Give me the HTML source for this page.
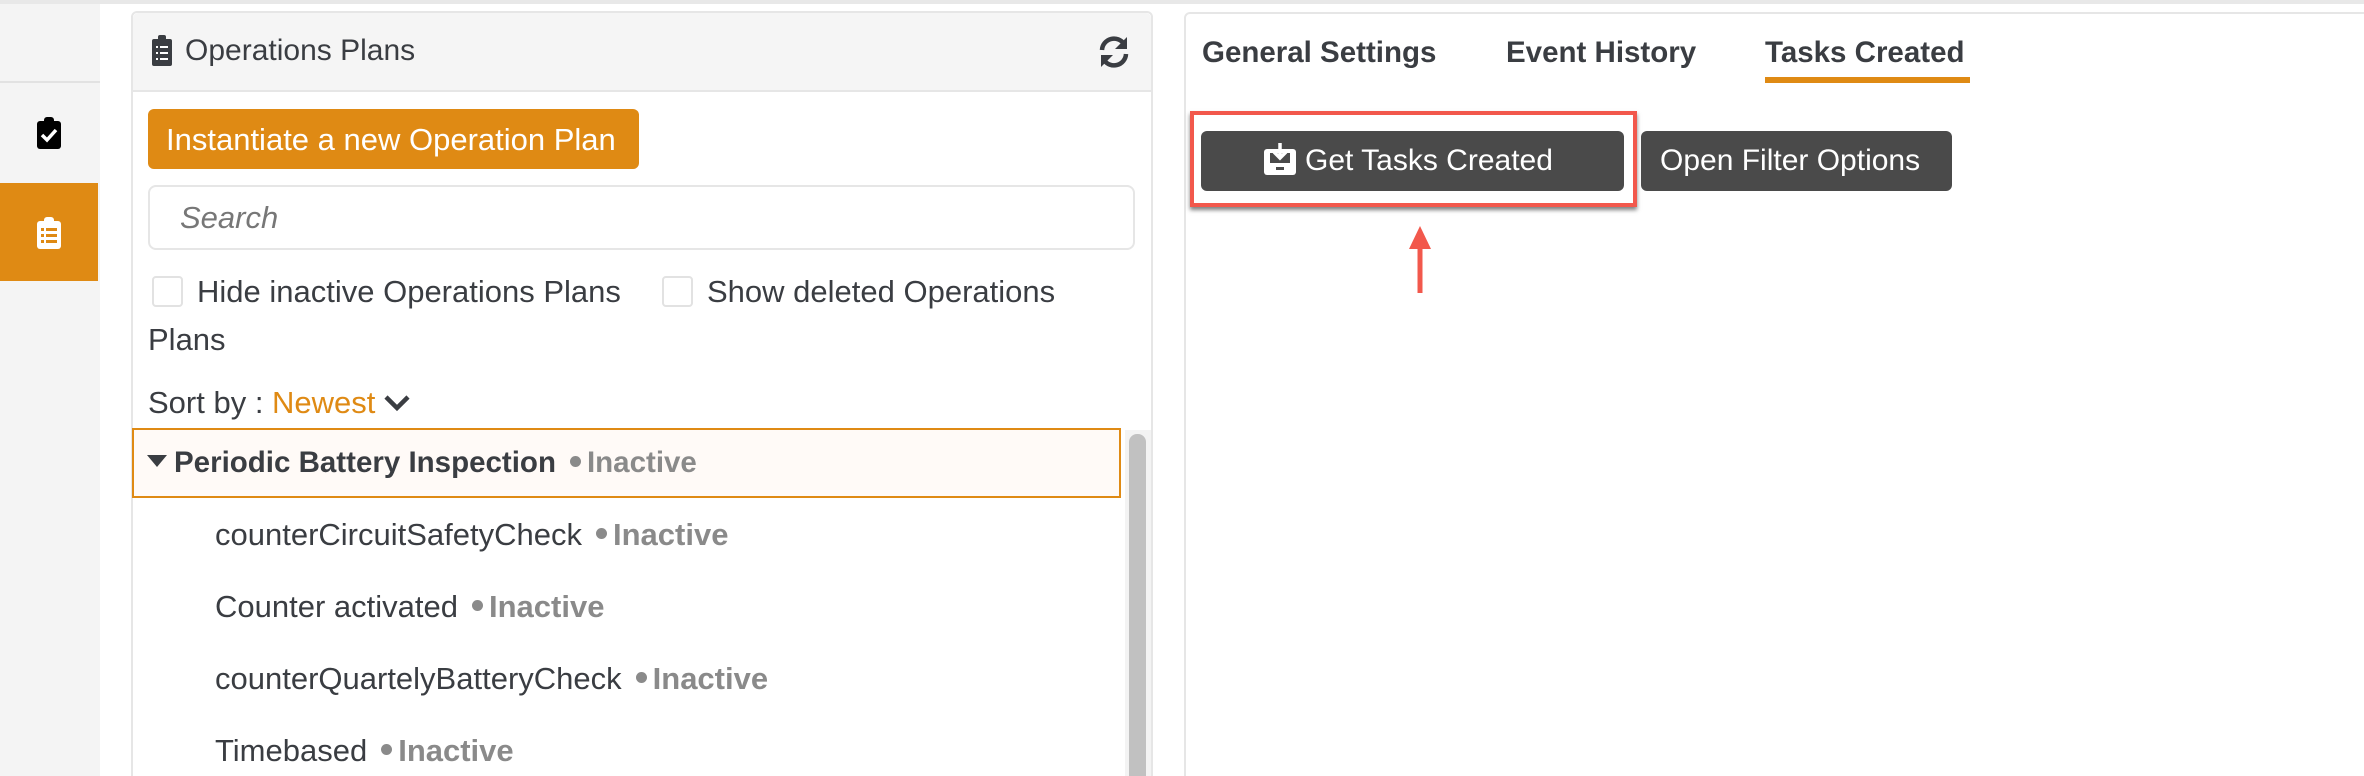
<!DOCTYPE html>
<html style="overflow:hidden"><head><meta charset="utf-8"><style>
*{box-sizing:border-box;margin:0;padding:0}
body{width:2364px;height:776px;overflow:hidden;background:#fff;font-family:"Liberation Sans",sans-serif;color:#3a3d42;position:relative}
.a{position:absolute}
.t{font-size:31px;white-space:nowrap;line-height:1}
.b{font-weight:bold;font-size:29.5px}
.in{color:#8a8a8a;font-weight:bold}
.dot{display:inline-block;width:11px;height:11px;border-radius:50%;background:#8a8a8a;margin:0 6px 0 14px;vertical-align:middle;position:relative;top:-3px}
.cb{width:31px;height:31px;border:2px solid #e2e2e2;border-radius:4px;background:#fff}
</style></head><body>
<div class="a" style="left:0;top:0;width:2364px;height:4px;background:#e8e8e8"></div>
<div class="a" style="left:0;top:4px;width:100px;height:772px;background:#f4f4f4"></div>
<div class="a" style="left:0;top:81px;width:100px;height:2px;background:#e2e2e2"></div>
<svg class="a" style="left:36px;top:116px" width="26" height="34" viewBox="0 0 26 34"><rect x="1" y="5" width="24" height="28" rx="3" fill="#000"/><rect x="8" y="1" width="10" height="8" rx="3" fill="#000"/><path d="M6 19l5 5 9-10" stroke="#fff" stroke-width="3.5" fill="none"/></svg>
<div class="a" style="left:0;top:183px;width:98px;height:98px;background:#df8a14"></div>
<svg class="a" style="left:36px;top:216px" width="26" height="34" viewBox="0 0 26 34"><rect x="1" y="5" width="24" height="28" rx="3" fill="#fff"/><rect x="8" y="1" width="10" height="8" rx="3" fill="#fff"/><g fill="#df8a14"><rect x="5" y="12" width="3" height="3"/><rect x="10" y="12" width="11" height="3"/><rect x="5" y="18" width="3" height="3"/><rect x="10" y="18" width="11" height="3"/><rect x="5" y="24" width="3" height="3"/><rect x="10" y="24" width="11" height="3"/></g></svg>

<div class="a" style="left:131px;top:11px;width:1022px;height:800px;border:2px solid #e6e6e6;border-radius:6px;background:#fff"></div>
<div class="a" style="left:133px;top:13px;width:1018px;height:79px;background:#f5f5f5;border-bottom:2px solid #e6e6e6;border-radius:5px 5px 0 0"></div>
<svg class="a" style="left:152px;top:34px" width="20" height="32" viewBox="0 0 20 32"><rect x="0" y="5" width="20" height="27" rx="2" fill="#3a3d42"/><rect x="6" y="1" width="8" height="7" rx="2" fill="#3a3d42"/><g fill="#fff"><rect x="4" y="12" width="2" height="2"/><rect x="8" y="12" width="8" height="2"/><rect x="4" y="18" width="2" height="2"/><rect x="8" y="18" width="8" height="2"/><rect x="4" y="24" width="2" height="2"/><rect x="8" y="24" width="8" height="2"/></g></svg>
<div class="a t" style="left:185px;top:36px;font-size:30px">Operations Plans</div>
<svg class="a" style="left:1097px;top:35px" width="34" height="34" viewBox="0 0 34 34"><path d="M5 15A12 12 0 0 1 27 9" stroke="#3a3d42" stroke-width="4.5" fill="none"/><path d="M30 2v12H18z" fill="#3a3d42"/><path d="M29 19A12 12 0 0 1 7 25" stroke="#3a3d42" stroke-width="4.5" fill="none"/><path d="M4 32V20h12z" fill="#3a3d42"/></svg>
<div class="a" style="left:148px;top:109px;width:491px;height:60px;background:#df8a14;border-radius:6px"></div>
<div class="a t" style="left:166px;top:124px;color:#fff">Instantiate a new Operation Plan</div>
<div class="a" style="left:148px;top:185px;width:987px;height:65px;border:2px solid #e6e6e6;border-radius:8px"></div>
<div class="a t" style="left:180px;top:202px;color:#777;font-style:italic">Search</div>
<div class="a cb" style="left:152px;top:276px"></div>
<div class="a t" style="left:197px;top:276px">Hide inactive Operations Plans</div>
<div class="a cb" style="left:662px;top:276px"></div>
<div class="a t" style="left:707px;top:276px">Show deleted Operations</div>
<div class="a t" style="left:148px;top:324px">Plans</div>
<div class="a t" style="left:148px;top:387px">Sort by : <span style="color:#df8a14">Newest</span><svg width="28" height="20" viewBox="0 0 28 20" style="margin-left:8px"><path d="M3 4l11 11 11-11" stroke="#3a3d42" stroke-width="4.5" fill="none"/></svg></div>
<div class="a" style="left:132px;top:428px;width:989px;height:70px;background:#fffaf7;border:2px solid #df8a14"></div>
<svg class="a" style="left:147px;top:455px" width="20" height="14"><path d="M0 0h20L10 12z" fill="#3a3d42"/></svg>
<div class="a t b" style="left:174px;top:448px">Periodic Battery Inspection<span class="dot"></span><span class="in">Inactive</span></div>
<div class="a t" style="left:215px;top:519px">counterCircuitSafetyCheck<span class="dot"></span><span class="in">Inactive</span></div>
<div class="a t" style="left:215px;top:591px">Counter activated<span class="dot"></span><span class="in">Inactive</span></div>
<div class="a t" style="left:215px;top:663px">counterQuartelyBatteryCheck<span class="dot"></span><span class="in">Inactive</span></div>
<div class="a t" style="left:215px;top:735px">Timebased<span class="dot"></span><span class="in">Inactive</span></div>
<div class="a" style="left:1125px;top:430px;width:26px;height:346px;background:#f3f3f3"></div>
<div class="a" style="left:1129px;top:434px;width:17px;height:360px;background:#c1c1c1;border-radius:8px"></div>

<div class="a" style="left:1184px;top:12px;width:1200px;height:800px;border:2px solid #e6e6e6;border-radius:6px"></div>
<div class="a t b" style="left:1202px;top:38px">General Settings</div>
<div class="a t b" style="left:1506px;top:38px">Event History</div>
<div class="a t b" style="left:1765px;top:38px">Tasks Created</div>
<div class="a" style="left:1765px;top:77px;width:205px;height:6px;background:#df8a14"></div>
<div class="a" style="left:1190px;top:111px;width:447px;height:96px;border:4px solid #f2584c;box-shadow:0 3px 4px rgba(0,0,0,.5)"></div>
<div class="a" style="left:1201px;top:131px;width:423px;height:60px;background:#4a4a4a;border-radius:6px"></div>
<svg class="a" style="left:1264px;top:143px" width="32" height="32" viewBox="0 0 32 32"><rect x="0" y="6" width="32" height="26" rx="3" fill="#fff"/><rect x="6" y="10" width="20" height="10" fill="#4a4a4a"/><path d="M16 0v14M10 9l6 6 6-6" stroke="#fff" stroke-width="3.5" fill="none"/><rect x="12" y="24" width="8" height="3" fill="#4a4a4a"/></svg>
<div class="a t" style="left:1305px;top:146px;color:#fff;font-size:30px">Get Tasks Created</div>
<div class="a" style="left:1641px;top:131px;width:311px;height:60px;background:#4a4a4a;border-radius:6px"></div>
<div class="a t" style="left:1660px;top:146px;color:#fff;font-size:30px">Open Filter Options</div>
<svg class="a" style="left:1405px;top:225px" width="30" height="75" viewBox="0 0 30 75"><path d="M15 12v56" stroke="#f2584c" stroke-width="5"/><path d="M15 1L4 24h22z" fill="#f2584c"/></svg>
</body></html>
